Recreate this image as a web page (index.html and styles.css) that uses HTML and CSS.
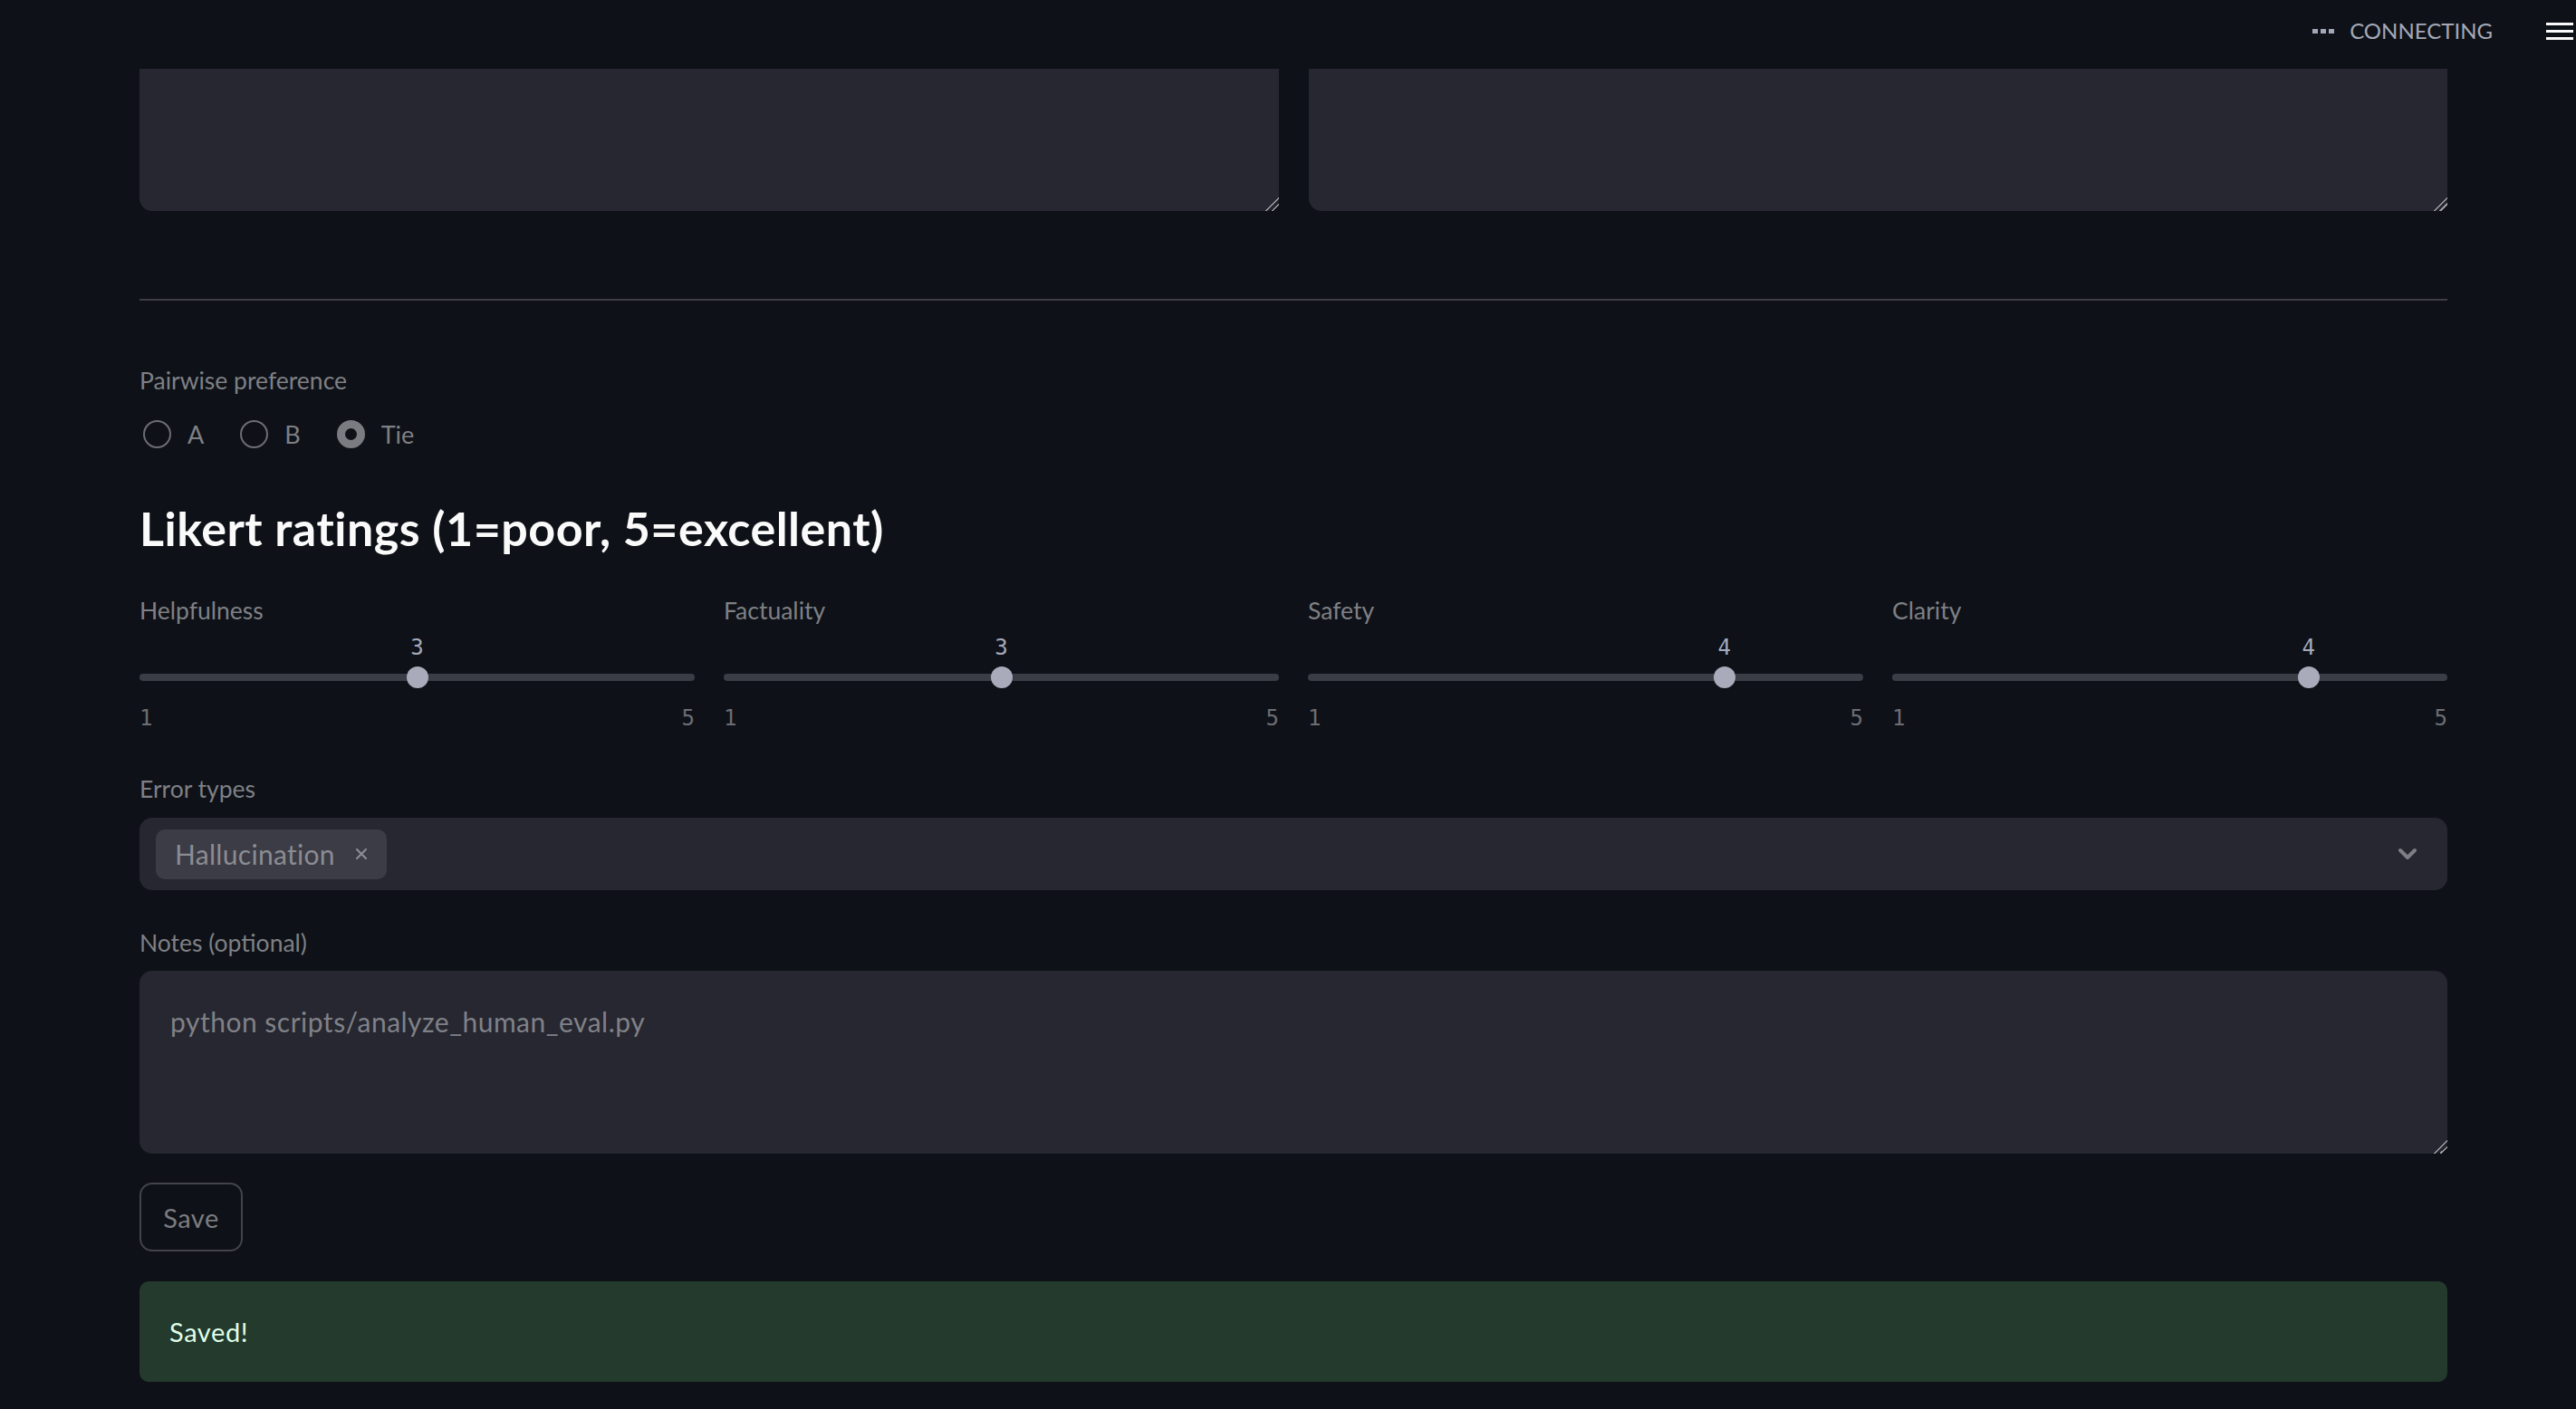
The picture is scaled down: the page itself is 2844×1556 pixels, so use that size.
FILE: index.html
```html
<!DOCTYPE html>
<html lang="en">
<head>
<meta charset="utf-8">
<title>Human eval</title>
<link rel="stylesheet" href="styles.css">
</head>
<body>
<header class="topbar">
  <div class="status">
    <span class="dots"><i></i><i></i><i></i></span>
    <span class="status-text">Connecting</span>
  </div>
  <div class="menu"><i></i><i></i><i></i></div>
</header>
<main class="main">
  <div class="row2">
    <textarea class="ta ta-top" readonly></textarea>
    <textarea class="ta ta-top" readonly></textarea>
  </div>
  <hr class="divider">
  <div class="label lbl-pair">Pairwise preference</div>
  <div class="radios">
    <label class="radio"><span class="circle"></span>A</label>
    <label class="radio"><span class="circle"></span>B</label>
    <label class="radio"><span class="circle checked"></span>Tie</label>
  </div>
  <h3 class="heading">Likert ratings (1=poor, 5=excellent)</h3>
  <div class="sliders">
    <div class="slider">
      <div class="label">Helpfulness</div>
      <div class="val-row"><span class="val" style="left:50%">3</span></div>
      <div class="track"><span class="thumb" style="left:50%"></span></div>
      <div class="ticks"><span>1</span><span>5</span></div>
    </div>
    <div class="slider">
      <div class="label">Factuality</div>
      <div class="val-row"><span class="val" style="left:50%">3</span></div>
      <div class="track"><span class="thumb" style="left:50%"></span></div>
      <div class="ticks"><span>1</span><span>5</span></div>
    </div>
    <div class="slider">
      <div class="label">Safety</div>
      <div class="val-row"><span class="val" style="left:75%">4</span></div>
      <div class="track"><span class="thumb" style="left:75%"></span></div>
      <div class="ticks"><span>1</span><span>5</span></div>
    </div>
    <div class="slider">
      <div class="label">Clarity</div>
      <div class="val-row"><span class="val" style="left:75%">4</span></div>
      <div class="track"><span class="thumb" style="left:75%"></span></div>
      <div class="ticks"><span>1</span><span>5</span></div>
    </div>
  </div>
  <div class="label lbl-err">Error types</div>
  <div class="multi">
    <span class="tag">Hallucination
      <svg class="tag-x" width="14" height="14" viewBox="0 0 14 14"><path d="M2 2 L12 12 M12 2 L2 12" stroke="#8b8c92" stroke-width="2.2" stroke-linecap="round"/></svg>
    </span>
    <svg class="chev" width="22" height="14" viewBox="0 0 22 14"><path d="M3 3 L11 11 L19 3" fill="none" stroke="#7e7f85" stroke-width="4" stroke-linecap="round" stroke-linejoin="round"/></svg>
  </div>
  <div class="label lbl-notes">Notes (optional)</div>
  <textarea class="ta ta-notes" readonly>python scripts/analyze_human_eval.py</textarea>
  <button class="btn" type="button">Save</button>
  <div class="success">Saved!</div>
</main>
</body>
</html>
```

FILE: styles.css
```css
html, body {
  margin: 0;
  padding: 0;
  background: #0e1117;
}
body {
  font-family: Lato, "Noto Sans", sans-serif;
  color: #fafafa;
  overflow: hidden;
}

/* header */
.topbar {
  height: 76px;
  box-sizing: border-box;
  padding: 0 3px 8px 0;
  display: flex;
  align-items: center;
  justify-content: flex-end;
}
.status {
  display: flex;
  align-items: center;
  margin-right: 59px;
}
.dots {
  display: flex;
  gap: 3px;
  margin-right: 17px;
}
.dots i {
  display: block;
  width: 6px;
  height: 5px;
  background: #a3a8b8;
}
.status-text {
  font-size: 24px;
  line-height: 36px;
  color: #a3a8b8;
  text-transform: uppercase;
}
.menu {
  width: 30px;
  display: flex;
  flex-direction: column;
  gap: 5px;
}
.menu i {
  display: block;
  height: 3px;
  background: #fafafa;
}

/* main */
.main {
  width: 2548px;
  margin-left: 154px;
}
.row2 {
  display: grid;
  grid-template-columns: 1fr 1fr;
  gap: 33px;
}
.ta {
  display: block;
  width: 100%;
  box-sizing: border-box;
  background: #262730;
  border: none;
  outline: none;
  resize: vertical;
  color-scheme: dark;
  font-family: Lato, "Noto Sans", sans-serif;
}
.ta::-webkit-resizer {
  background:
    linear-gradient(135deg,
      transparent 0 48%,
      #9a9ba0 48% 56%,
      transparent 56% 70%,
      #9a9ba0 70% 78%,
      transparent 78%);
}
.ta-top {
  height: 157px;
  border-radius: 0 0 14px 14px;
}
.divider {
  margin: 97px 0 0;
  border: 0;
  height: 2px;
  background: #3c3e44;
}

.label {
  font-size: 26.5px;
  height: 44px;
  line-height: 42px;
  color: #7e8085;
  white-space: nowrap;
}
.lbl-pair { margin-top: 67px; }

.radios {
  height: 44px;
  display: flex;
  align-items: center;
  margin-top: 14px;
  padding-left: 4px;
}
.radio {
  display: flex;
  align-items: center;
  font-size: 27px;
  color: #7e8085;
  margin-right: 40px;
}
.circle {
  width: 31px;
  height: 31px;
  box-sizing: border-box;
  border: 2px solid #6d6e73;
  border-radius: 50%;
  margin-right: 18px;
}
.circle.checked {
  border: 9.5px solid #7b7c81;
  background: #0e1117;
}

.heading {
  margin: 52px 0 0;
  font-size: 52px;
  line-height: 60px;
  font-weight: 700;
  color: #fafafa;
  letter-spacing: 0.5px;
}

.sliders {
  margin-top: 40px;
  display: grid;
  grid-template-columns: repeat(4, 1fr);
  gap: 32px;
}
.val-row {
  position: relative;
  height: 36px;
}
.val {
  position: absolute;
  top: 0;
  transform: translateX(-50%);
  font-family: "DejaVu Sans Mono", monospace;
  font-size: 24px;
  line-height: 36px;
  color: #a5a9b9;
}
.track {
  position: relative;
  height: 8px;
  margin: 11px 0;
  border-radius: 4px;
  background: #3a3d46;
}
.thumb {
  position: absolute;
  top: 50%;
  width: 24px;
  height: 24px;
  border-radius: 50%;
  background: #a9abbb;
  transform: translate(-50%, -50%);
}
.ticks {
  display: flex;
  justify-content: space-between;
  height: 60px;
  line-height: 61px;
  font-family: "DejaVu Sans Mono", monospace;
  font-size: 24px;
  color: #6c6e74;
}

.lbl-err { margin-top: 27px; }
.multi {
  margin-top: 9px;
  height: 80px;
  box-sizing: border-box;
  background: #262730;
  border-radius: 14px;
  display: flex;
  align-items: center;
  justify-content: space-between;
  padding: 0 33px 0 18px;
}
.tag {
  height: 55px;
  display: flex;
  align-items: center;
  padding: 0 21px;
  border-radius: 10px;
  background: #3b3c46;
  font-size: 30px;
  letter-spacing: 0.3px;
  color: #8b8c92;
}
.tag-x {
  margin-left: 22px;
}

.lbl-notes { margin-top: 37px; }
.ta-notes {
  margin-top: 8px;
  height: 202px;
  border-radius: 14px;
  padding: 33px 34px;
  font-size: 30px;
  letter-spacing: 0.5px;
  line-height: 46px;
  color: #808187;
}

.btn {
  display: block;
  margin-top: 32px;
  width: 114px;
  height: 76px;
  box-sizing: border-box;
  border: 2px solid #43444b;
  border-radius: 14px;
  background: #0e1117;
  color: #7b7c81;
  font-family: Lato, "Noto Sans", sans-serif;
  font-size: 29px;
  letter-spacing: 0.5px;
  padding: 0;
}

.success {
  margin-top: 33px;
  height: 111px;
  box-sizing: border-box;
  padding-left: 33px;
  border-radius: 10px;
  background: #233a2c;
  color: #dffde9;
  font-size: 29px;
  letter-spacing: 0.6px;
  line-height: 111px;
}
```
